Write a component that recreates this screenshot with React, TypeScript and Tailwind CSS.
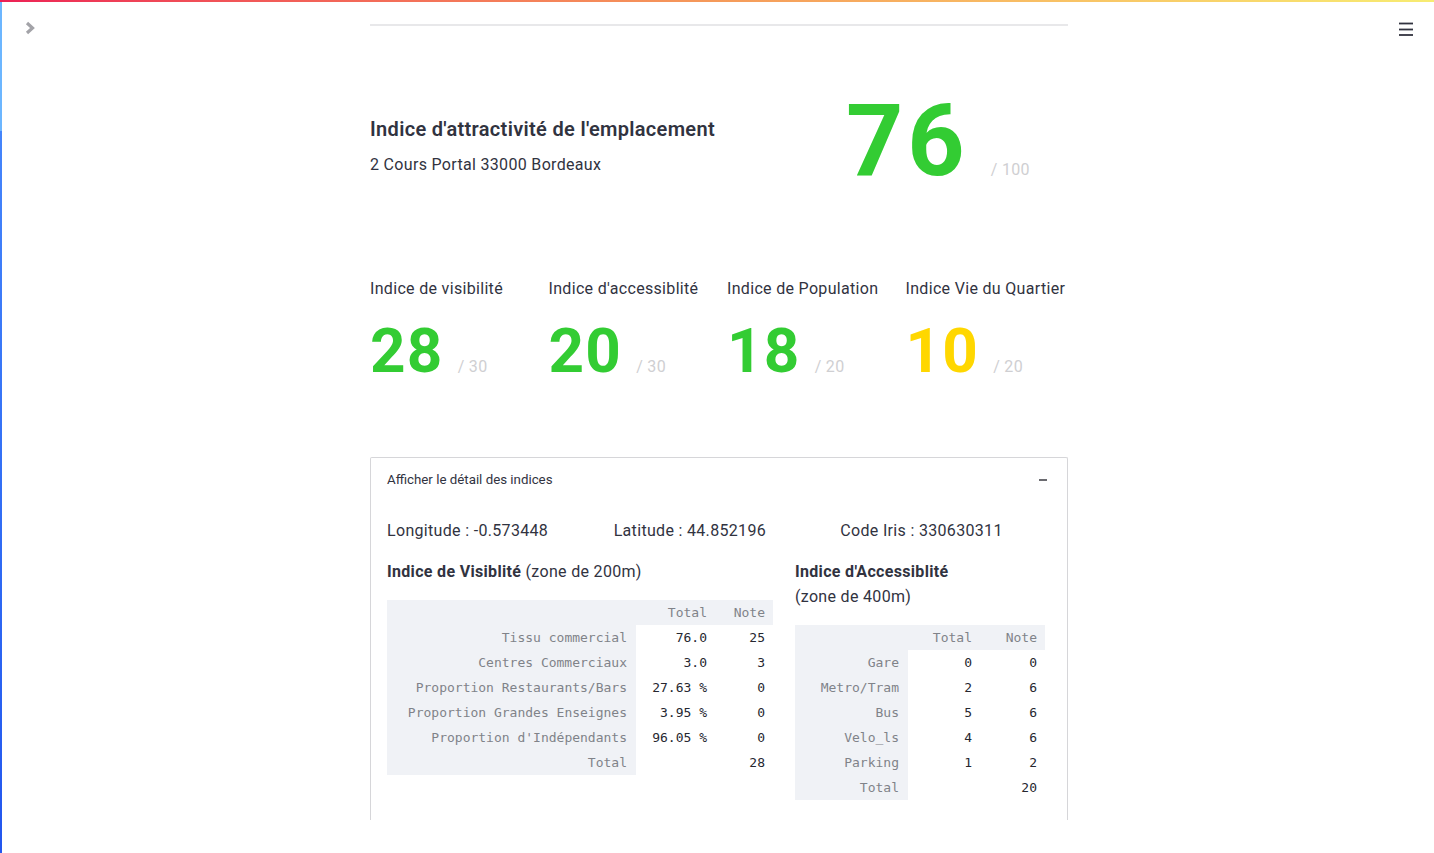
import React from "react";

interface Row {
  label: string;
  total: string;
  note: string;
}

const visibilite: Row[] = [
  { label: "Tissu commercial", total: "76.0", note: "25" },
  { label: "Centres Commerciaux", total: "3.0", note: "3" },
  { label: "Proportion Restaurants/Bars", total: "27.63 %", note: "0" },
  { label: "Proportion Grandes Enseignes", total: "3.95 %", note: "0" },
  { label: "Proportion d'Indépendants", total: "96.05 %", note: "0" },
  { label: "Total", total: "", note: "28" },
];

const accessibilite: Row[] = [
  { label: "Gare", total: "0", note: "0" },
  { label: "Metro/Tram", total: "2", note: "6" },
  { label: "Bus", total: "5", note: "6" },
  { label: "Velo_ls", total: "4", note: "6" },
  { label: "Parking", total: "1", note: "2" },
  { label: "Total", total: "", note: "20" },
];

const scores = [
  { label: "Indice de visibilité", value: 28, max: 30, color: "text-[#33cc33]" },
  { label: "Indice d'accessiblité", value: 20, max: 30, color: "text-[#33cc33]" },
  { label: "Indice de Population", value: 18, max: 20, color: "text-[#33cc33]" },
  { label: "Indice Vie du Quartier", value: 10, max: 20, color: "text-[#ffd700]" },
];

const DataTable = ({ rows, widths }: { rows: Row[]; widths: [string, string, string] }) => {
  return (
    <table className="border-collapse table-fixed tracking-normal font-['DejaVu_Sans_Mono','Liberation_Mono',monospace] text-[13px]">
      <colgroup>
        <col className={widths[0]} />
        <col className={widths[1]} />
        <col className={widths[2]} />
      </colgroup>
      <thead>
        <tr className="h-[25px] bg-[#f0f2f6] text-[#808389]">
          <th className="p-0"></th>
          <th className="p-0 pr-[8px] text-right font-normal">Total</th>
          <th className="p-0 pr-[8px] text-right font-normal">Note</th>
        </tr>
      </thead>
      <tbody>
        {rows.map((r, idx) => (
          <tr key={idx} className="h-[25px]">
            <td className="p-0 pr-[9px] text-right bg-[#f0f2f6] text-[#808389] whitespace-nowrap">{r.label}</td>
            <td className="p-0 pr-[8px] text-right bg-white text-[#262730] whitespace-nowrap">{r.total}</td>
            <td className="p-0 pr-[8px] text-right bg-white text-[#262730]">{r.note}</td>
          </tr>
        ))}
      </tbody>
    </table>
  );
};

const App = () => {
  return (
    <div className="relative min-h-screen bg-white text-[#31333F] tracking-[0.02em] font-['Roboto','Noto_Sans',sans-serif]">
      {/* decoration bar */}
      <div className="fixed top-0 left-0 right-0 h-[2px] bg-gradient-to-r from-[#ec1f55] via-[#f59a5a] to-[#f7ec72] z-10" />
      {/* left strip */}
      <div className="fixed top-0 bottom-0 left-0 w-[2px] flex flex-col">
        <div className="h-[131px] bg-[#6cb6ff]" />
        <div className="flex-1 bg-gradient-to-b from-[#4585fb] to-[#2356ee]" />
      </div>
      {/* sidebar toggle */}
      <svg className="absolute left-[24px] top-[21px]" width="12" height="14" viewBox="0 0 12 14">
        <polyline points="3,2 8.5,7 3,12" fill="none" stroke="#a3a3a8" strokeWidth="3.2" />
      </svg>
      {/* menu */}
      <svg className="absolute left-[1398px] top-[22px]" width="16" height="14" viewBox="0 0 16 14">
        <line x1="1" y1="1.5" x2="15" y2="1.5" stroke="#31333F" strokeWidth="1.8" />
        <line x1="1" y1="7.5" x2="15" y2="7.5" stroke="#31333F" strokeWidth="1.8" />
        <line x1="1" y1="13" x2="15" y2="13" stroke="#31333F" strokeWidth="1.8" />
      </svg>

      <div className="pl-[370px] pt-[24px]">
        <div className="w-[698px]">
          <div className="h-[2px] bg-[#e8e8ea]" />

          {/* main score */}
          <div className="flex mt-[65px]">
            <div className="w-[476px] pt-[24px]">
              <div className="text-[20px] leading-[28px] font-semibold">Indice d'attractivité de l'emplacement</div>
              <div className="mt-[10px] text-[16px] leading-[24px]">2 Cours Portal 33000 Bordeaux</div>
            </div>
            <div className="flex items-baseline">
              <span className="text-[100px] leading-none font-bold tracking-[0.04em] text-[#33cc33]">76</span>
              <span className="ml-[22px] text-[16px] text-[#cfcfd2]">/ 100</span>
            </div>
          </div>

          {/* sub scores */}
          <div className="grid grid-cols-4 gap-4 mt-[86px]">
            {scores.map((s) => (
              <div key={s.label}>
                <div className="text-[16px] leading-[24px] whitespace-nowrap">{s.label}</div>
                <div className="mt-[19px] flex items-baseline">
                  <span className={`text-[62px] leading-none font-bold tracking-[0.02em] ${s.color}`}>{s.value}</span>
                  <span className="ml-[14px] text-[16px] text-[#cfcfd2]">/ {s.max}</span>
                </div>
              </div>
            ))}
          </div>

          {/* expander */}
          <div className="mt-[75px] border-t border-l border-r border-[#d6d6d9] rounded-t-[2px]">
            <div className="h-[43px] px-4 flex items-center justify-between">
              <span className="text-[13.3px] tracking-normal">Afficher le détail des indices</span>
              <div className="w-[8px] h-[2px] bg-[#6b6b70] mr-[4px]" />
            </div>
            <div className="px-4 pb-[20px]">
              <div className="grid grid-cols-3 gap-4 mt-[18px] text-[16px] leading-[24px]">
                <div>Longitude : -0.573448</div>
                <div>Latitude : 44.852196</div>
                <div>Code Iris : 330630311</div>
              </div>
              <div className="flex mt-[17px]">
                <div className="w-[386px]">
                  <div className="text-[16px] leading-[24px]">
                    <span className="font-bold">Indice de Visiblité</span> (zone de 200m)
                  </div>
                  <div className="mt-[16px]">
                    <DataTable rows={visibilite} widths={["w-[249px]", "w-[79px]", "w-[58px]"]} />
                  </div>
                </div>
                <div className="ml-[22px] w-[256px]">
                  <div className="text-[16px] leading-[24px]">
                    <div className="font-bold">Indice d'Accessiblité</div>
                    <div className="mt-[1px]">(zone de 400m)</div>
                  </div>
                  <div className="mt-[16px]">
                    <DataTable rows={accessibilite} widths={["w-[113px]", "w-[72px]", "w-[65px]"]} />
                  </div>
                </div>
              </div>
            </div>
          </div>
        </div>
      </div>
    </div>
  );
};

export default App;
